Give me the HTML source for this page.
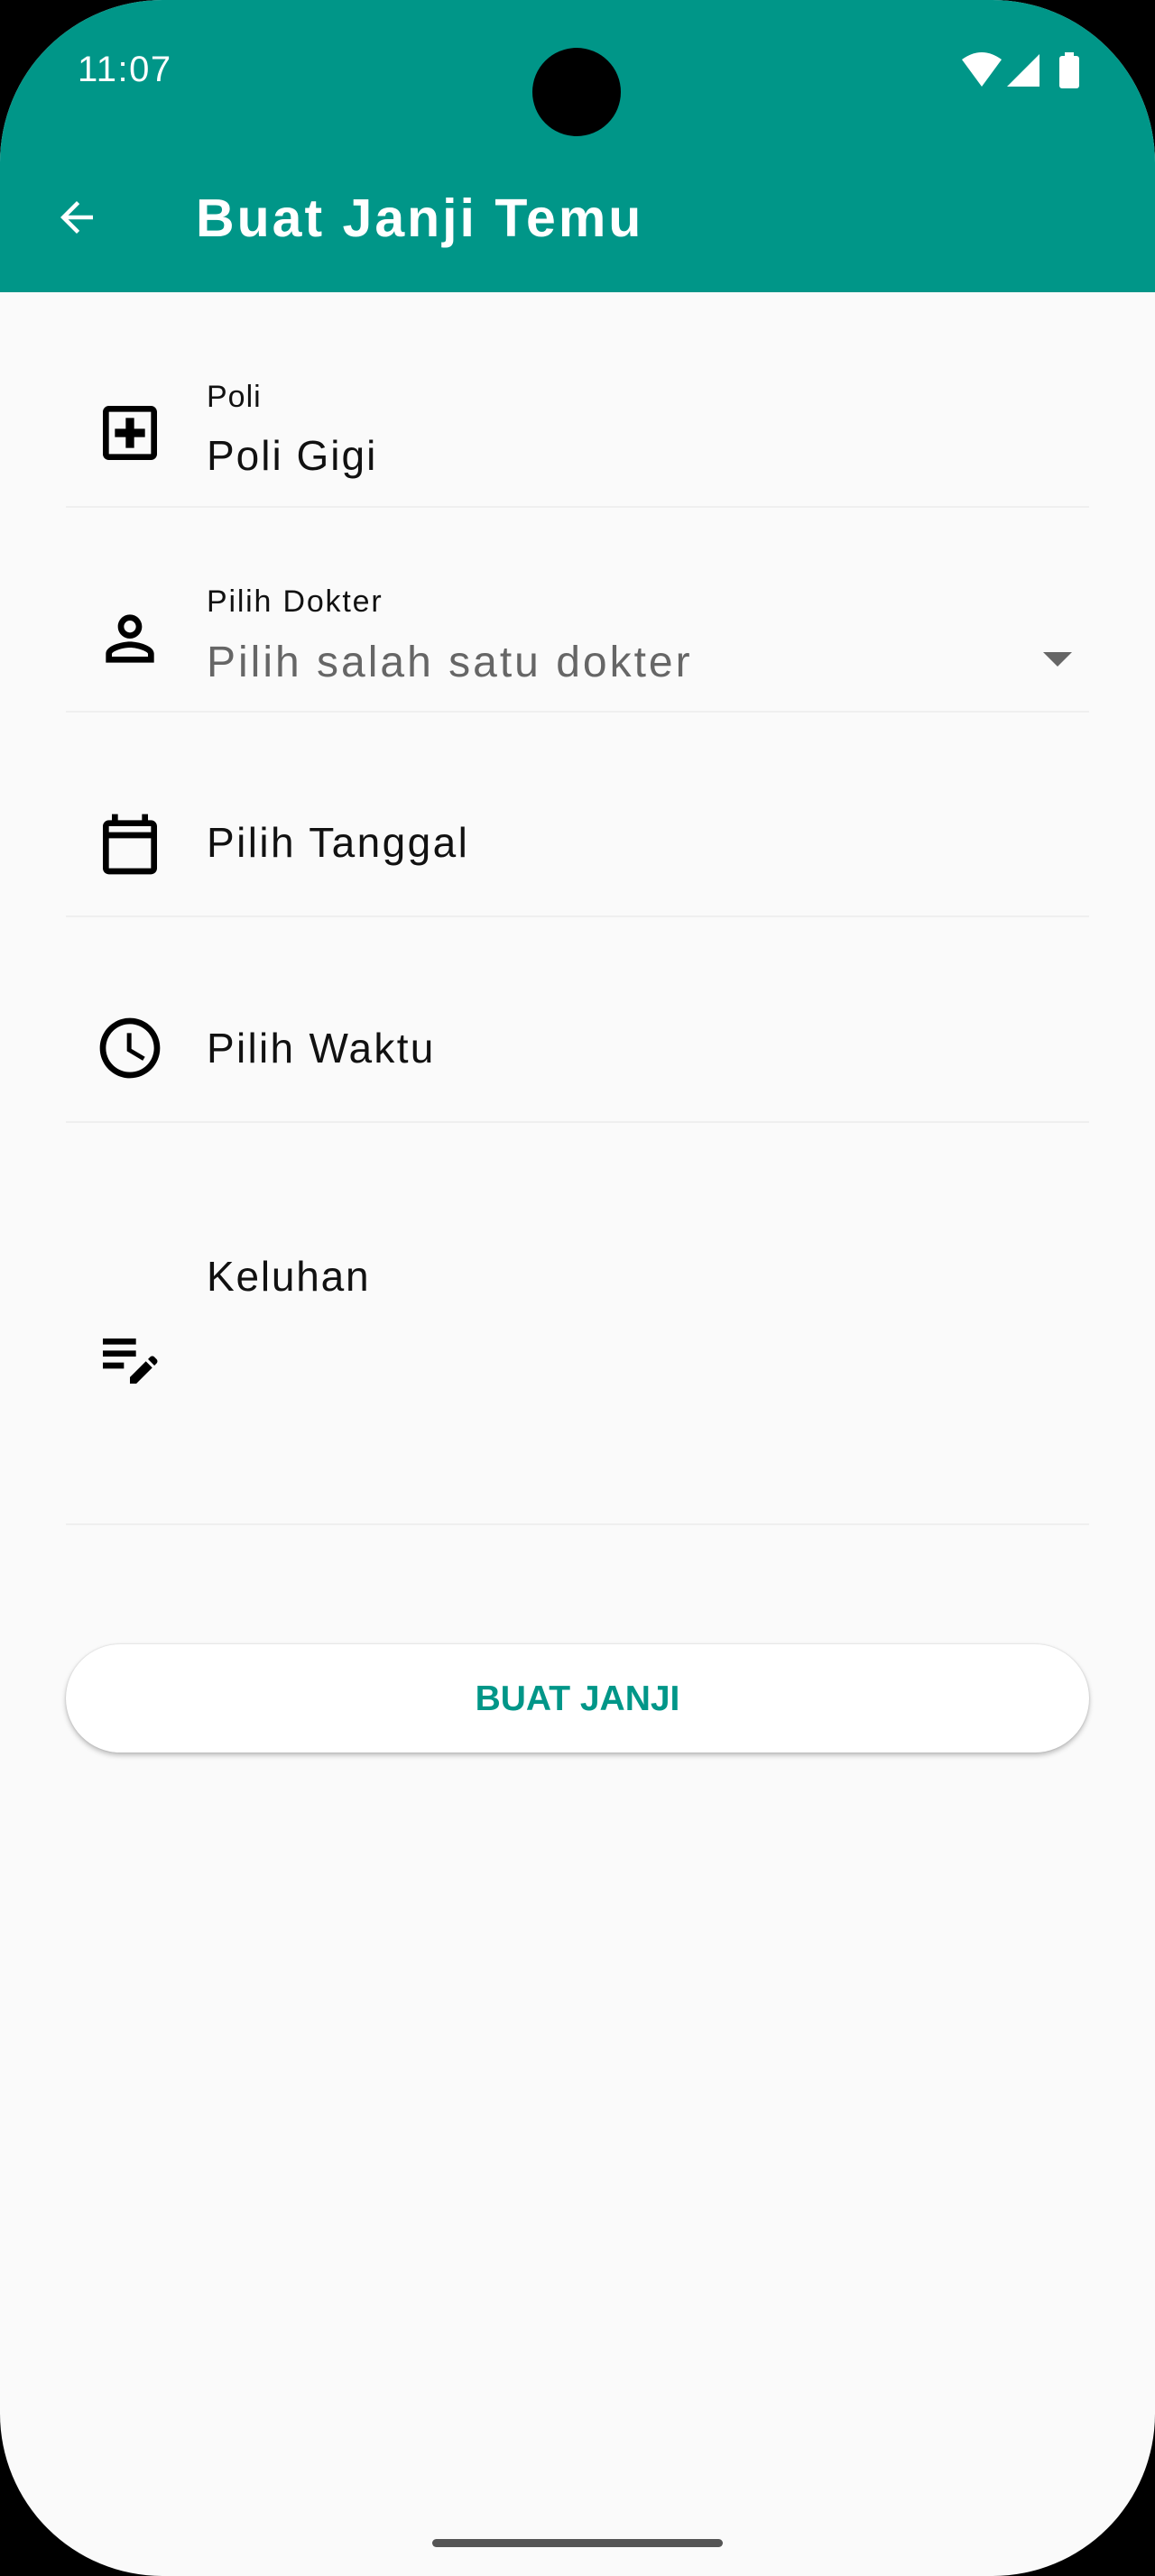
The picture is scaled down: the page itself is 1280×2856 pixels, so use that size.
<!DOCTYPE html>
<html><head><meta charset="utf-8"><style>
*{margin:0;padding:0;box-sizing:border-box}
html,body{width:1280px;height:2856px;background:#000;overflow:hidden;font-family:"Liberation Sans",sans-serif}
#scr{position:absolute;left:0;top:0;width:1280px;height:2856px;background:#fafafa;border-radius:180px;overflow:hidden}
#hdr{position:absolute;left:0;top:0;width:1280px;height:324px;background:#009688}
.t{position:absolute;white-space:nowrap;line-height:1}
.div{position:absolute;left:73px;width:1134px;height:2px;background:#efefef}
svg{position:absolute}
</style></head><body>
<div id="scr">
<div id="hdr">
<div class="t" style="left:86px;top:57px;font-size:40px;letter-spacing:1.5px;color:#fff">11:07</div>
<div style="position:absolute;left:590px;top:53px;width:98px;height:98px;border-radius:50%;background:#000"></div>
<svg style="left:1062px;top:56px" width="140" height="44" viewBox="0 0 140 44">
<path d="M4 10 Q26 -6 48 10 L26 40 Z" fill="#fff"/>
<path d="M90 4 L90 40 L54 40 Z" fill="#fff"/>
<rect x="112" y="6" width="22" height="36" rx="3" fill="#fff"/><rect x="118" y="2" width="10" height="6" fill="#fff"/>
</svg>
<svg style="left:58px;top:214px" width="54" height="54" viewBox="0 0 24 24"><path d="M20 11H7.83l5.59-5.59L12 4l-8 8 8 8 1.41-1.41L7.83 13H20v-2z" fill="#fff"/></svg>
<div class="t" style="left:217px;top:213px;font-size:59px;font-weight:bold;letter-spacing:3px;color:#fff">Buat Janji Temu</div>
</div>

<svg style="left:104px;top:440px" width="80" height="80" viewBox="0 0 24 24"><path d="M19 3H5c-1.1 0-2 .9-2 2v14c0 1.1.9 2 2 2h14c1.1 0 2-.9 2-2V5c0-1.1-.9-2-2-2zm0 16H5V5h14v14z" fill="#000"/><path d="M10.6 17h2.8v-3.6H17v-2.8h-3.6V7h-2.8v3.6H7v2.8h3.6z" fill="#000"/></svg>
<div class="t" style="left:229px;top:423px;font-size:34px;letter-spacing:1px;color:#111">Poli</div>
<div class="t" style="left:229px;top:482px;font-size:46px;letter-spacing:2px;color:#111">Poli Gigi</div>
<div class="div" style="top:561px"></div>

<svg style="left:104px;top:668px" width="80" height="80" viewBox="0 0 24 24"><path d="M12 6c1.1 0 2 .9 2 2s-.9 2-2 2-2-.9-2-2 .9-2 2-2m0 9c2.7 0 5.8 1.29 6 2v1H6v-.99c.2-.72 3.3-2.01 6-2.01M12 4C9.79 4 8 5.79 8 8s1.79 4 4 4 4-1.79 4-4-1.79-4-4-4zm0 9c-2.67 0-8 1.34-8 4v3h16v-3c0-2.66-5.33-4-8-4z" fill="#000"/></svg>
<div class="t" style="left:229px;top:650px;font-size:34px;letter-spacing:1.8px;color:#111">Pilih Dokter</div>
<div class="t" style="left:229px;top:711px;font-size:48px;letter-spacing:3px;color:#666">Pilih salah satu dokter</div>
<svg style="left:1156px;top:723px" width="32" height="18" viewBox="0 0 32 18"><path d="M0 0h32L16 16z" fill="#666"/></svg>
<div class="div" style="top:788px"></div>

<svg style="left:104px;top:896px" width="80" height="80" viewBox="0 0 24 24"><path d="M19 4h-1V2h-2v2H8V2H6v2H5c-1.11 0-2 .9-2 2v14c0 1.1.89 2 2 2h14c1.1 0 2-.9 2-2V6c0-1.1-.9-2-2-2zm0 16H5V10h14v10zm0-12H5V6h14v2z" fill="#000"/></svg>
<div class="t" style="left:229px;top:911px;font-size:46px;letter-spacing:2.4px;color:#111">Pilih Tanggal</div>
<div class="div" style="top:1015px"></div>

<svg style="left:104px;top:1122px" width="80" height="80" viewBox="0 0 24 24"><path d="M11.99 2C6.47 2 2 6.48 2 12s4.47 10 9.99 10C17.52 22 22 17.52 22 12S17.52 2 11.99 2zM12 20c-4.42 0-8-3.58-8-8s3.58-8 8-8 8 3.58 8 8-3.58 8-8 8zm.5-13H11v6l5.25 3.15.75-1.23-4.5-2.67z" fill="#000"/></svg>
<div class="t" style="left:229px;top:1139px;font-size:46px;letter-spacing:2.3px;color:#111">Pilih Waktu</div>
<div class="div" style="top:1243px"></div>

<svg style="left:104px;top:1464px" width="80" height="80" viewBox="0 0 24 24"><path d="M3 10h11v2H3zm0-2h11V6H3zm0 8h7v-2H3zm15.01-3.13.71-.71c.39-.39 1.02-.39 1.41 0l.71.71c.39.39.39 1.02 0 1.41l-.71.71-2.12-2.12zm-.71.71-5.3 5.3V21h2.12l5.3-5.3-2.12-2.12z" fill="#000"/></svg>
<div class="t" style="left:229px;top:1392px;font-size:46px;letter-spacing:1.8px;color:#111">Keluhan</div>
<div class="div" style="top:1689px"></div>

<div style="position:absolute;left:73px;top:1823px;width:1134px;height:120px;border-radius:60px;background:#fff;box-shadow:0 3px 6px rgba(0,0,0,.25),0 0 2px rgba(0,0,0,.15)"></div>
<div class="t" style="left:73px;width:1134px;text-align:center;top:1864px;font-size:39px;font-weight:bold;color:#009688">BUAT JANJI</div>

<div style="position:absolute;left:479px;top:2815px;width:322px;height:9px;border-radius:5px;background:#555"></div>
</div>
</body></html>
